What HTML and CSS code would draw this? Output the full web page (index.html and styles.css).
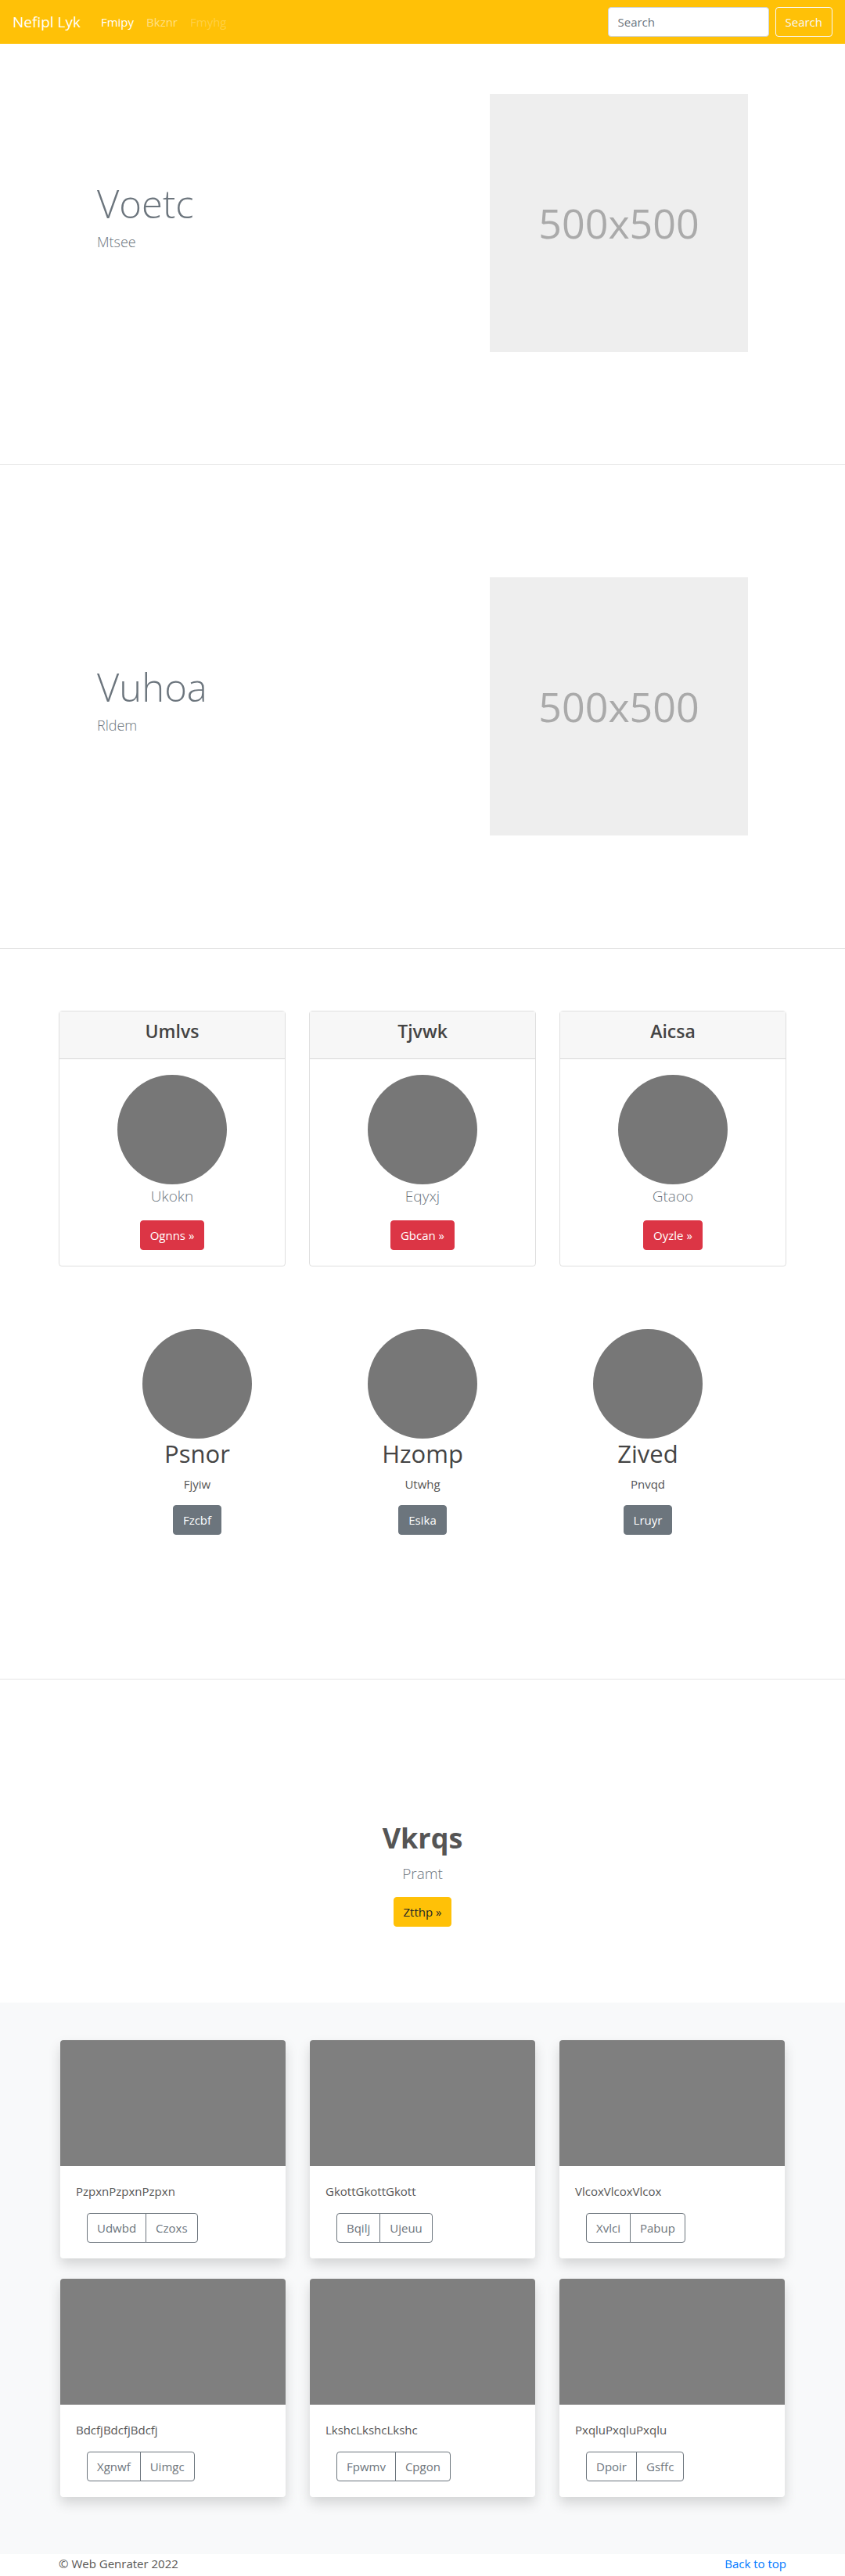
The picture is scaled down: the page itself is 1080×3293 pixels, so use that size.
FILE: index.html
```html
<!DOCTYPE html>
<html lang="en">
<head>
<meta charset="utf-8">
<title>Nefipl Lyk</title>
<link rel="stylesheet" href="styles.css">
</head>
<body>
<nav class="navbar">
  <a class="brand" href="#">Nefipl Lyk</a>
  <ul class="nav">
    <li><a class="nav-link active" href="#">Fmipy</a></li>
    <li><a class="nav-link" href="#">Bkznr</a></li>
    <li><a class="nav-link disabled" href="#">Fmyhg</a></li>
  </ul>
  <form class="search">
    <input class="search-input" type="text" placeholder="Search">
    <button class="search-btn" type="button">Search</button>
  </form>
</nav>

<section class="feature feature-first">
  <div class="feature-row">
    <div class="feature-text">
      <h1 class="feature-title">Voetc</h1>
      <p class="feature-lead">Mtsee</p>
    </div>
    <div class="placeholder">500x500</div>
  </div>
</section>
<hr class="divider">

<section class="feature feature-second">
  <div class="feature-row">
    <div class="feature-text">
      <h1 class="feature-title">Vuhoa</h1>
      <p class="feature-lead">Rldem</p>
    </div>
    <div class="placeholder">500x500</div>
  </div>
</section>
<hr class="divider">

<section class="team">
  <div class="card-row">
    <div class="p-card">
      <div class="p-card-header"><h4 class="p-card-title">Umlvs</h4></div>
      <div class="p-card-body">
        <div class="circle"></div>
        <p class="p-card-text">Ukokn</p>
        <a class="btn btn-danger" href="#">Ognns &raquo;</a>
      </div>
    </div>
    <div class="p-card">
      <div class="p-card-header"><h4 class="p-card-title">Tjvwk</h4></div>
      <div class="p-card-body">
        <div class="circle"></div>
        <p class="p-card-text">Eqyxj</p>
        <a class="btn btn-danger" href="#">Gbcan &raquo;</a>
      </div>
    </div>
    <div class="p-card">
      <div class="p-card-header"><h4 class="p-card-title">Aicsa</h4></div>
      <div class="p-card-body">
        <div class="circle"></div>
        <p class="p-card-text">Gtaoo</p>
        <a class="btn btn-danger" href="#">Oyzle &raquo;</a>
      </div>
    </div>
  </div>

  <div class="marketing">
    <div class="m-item">
      <div class="circle"></div>
      <h2 class="m-title">Psnor</h2>
      <p class="m-text">Fjyiw</p>
      <a class="btn btn-secondary" href="#">Fzcbf</a>
    </div>
    <div class="m-item">
      <div class="circle"></div>
      <h2 class="m-title">Hzomp</h2>
      <p class="m-text">Utwhg</p>
      <a class="btn btn-secondary" href="#">Esika</a>
    </div>
    <div class="m-item">
      <div class="circle"></div>
      <h2 class="m-title">Zived</h2>
      <p class="m-text">Pnvqd</p>
      <a class="btn btn-secondary" href="#">Lruyr</a>
    </div>
  </div>
</section>
<hr class="divider">

<section class="cta">
  <h1 class="cta-title">Vkrqs</h1>
  <p class="cta-lead">Pramt</p>
  <a class="btn btn-warning" href="#">Ztthp &raquo;</a>
</section>

<section class="album">
  <div class="album-grid">
    <div class="a-card">
      <div class="a-thumb"></div>
      <div class="a-body">
        <p class="a-text">PzpxnPzpxnPzpxn</p>
        <div class="btn-group"><a class="btn-o" href="#">Udwbd</a><a class="btn-o" href="#">Czoxs</a></div>
      </div>
    </div>
    <div class="a-card">
      <div class="a-thumb"></div>
      <div class="a-body">
        <p class="a-text">GkottGkottGkott</p>
        <div class="btn-group"><a class="btn-o" href="#">Bqilj</a><a class="btn-o" href="#">Ujeuu</a></div>
      </div>
    </div>
    <div class="a-card">
      <div class="a-thumb"></div>
      <div class="a-body">
        <p class="a-text">VlcoxVlcoxVlcox</p>
        <div class="btn-group"><a class="btn-o" href="#">Xvlci</a><a class="btn-o" href="#">Pabup</a></div>
      </div>
    </div>
    <div class="a-card">
      <div class="a-thumb"></div>
      <div class="a-body">
        <p class="a-text">BdcfjBdcfjBdcfj</p>
        <div class="btn-group"><a class="btn-o" href="#">Xgnwf</a><a class="btn-o" href="#">Uimgc</a></div>
      </div>
    </div>
    <div class="a-card">
      <div class="a-thumb"></div>
      <div class="a-body">
        <p class="a-text">LkshcLkshcLkshc</p>
        <div class="btn-group"><a class="btn-o" href="#">Fpwmv</a><a class="btn-o" href="#">Cpgon</a></div>
      </div>
    </div>
    <div class="a-card">
      <div class="a-thumb"></div>
      <div class="a-body">
        <p class="a-text">PxqluPxqluPxqlu</p>
        <div class="btn-group"><a class="btn-o" href="#">Dpoir</a><a class="btn-o" href="#">Gsffc</a></div>
      </div>
    </div>
  </div>
</section>

<footer class="footer">
  <p class="footer-copy">&copy; Web Genrater 2022</p>
  <a class="footer-top" href="#">Back to top</a>
</footer>
</body>
</html>
```
FILE: styles.css
```css
* { box-sizing: border-box; }
html, body { margin: 0; padding: 0; }
body {
  font-family: "Open Sans", "Noto Sans", sans-serif;
  font-size: 16px;
  line-height: 1.5;
  color: #212529;
  background: #fff;
}
a { text-decoration: none; }

/* navbar */
.navbar {
  display: flex;
  align-items: center;
  height: 56px;
  padding: 0 16px;
  background: #ffc107;
}
.brand {
  font-size: 19px;
  line-height: 30px;
  color: #fff;
  margin-right: 18px;
}
.nav {
  display: flex;
  flex: 1;
  list-style: none;
  margin: 0;
  padding: 0;
}
.nav-link {
  display: block;
  padding: 8px;
  font-size: 15px;
  color: rgba(255,255,255,.5);
}
.nav-link.active { color: #fff; }
.nav-link.disabled { color: rgba(255,255,255,.25); }
.search { display: flex; margin: 0; }
.search-input {
  width: 206px;
  height: 38px;
  padding: 6px 12px;
  margin-right: 8px;
  border: 1px solid #ced4da;
  border-radius: 4px;
  font: inherit;
  font-size: 15px;
  color: #495057;
  background: #fff;
}
.search-input::placeholder { color: #6c757d; }
.search-btn {
  height: 38px;
  padding: 6px 12px;
  border: 1px solid #f8f9fa;
  border-radius: 4px;
  background: transparent;
  color: #f8f9fa;
  font: inherit;
  font-size: 15px;
}

/* features */
.feature-first { padding: 64px 0 143px; }
.feature-second { padding: 144px 0 144px; }
.feature-row {
  display: flex;
  align-items: center;
  width: 960px;
  margin: 0 auto;
}
.feature-text { flex: 1; padding-left: 64px; }
.feature-title {
  margin: 0 0 6px;
  font-size: 49px;
  font-weight: 300;
  line-height: 1.2;
  color: #6c757d;
}
.feature-lead {
  margin: 0 0 16px;
  font-size: 18px;
  font-weight: 300;
  line-height: 1.5;
  color: #6c757d;
}
.placeholder {
  width: 330px;
  height: 330px;
  margin-right: 64px;
  background: #eee;
  color: #aaa;
  display: flex;
  align-items: center;
  justify-content: center;
  font-size: 52px;
}
.divider {
  margin: 0;
  border: 0;
  border-top: 1px solid #e5e5e5;
}

/* team */
.team { padding: 79px 0 184px; }
.card-row {
  display: grid;
  grid-template-columns: repeat(3, 290px);
  column-gap: 30px;
  justify-content: center;
}
.p-card {
  border: 1px solid rgba(0,0,0,.125);
  border-radius: 4px;
  text-align: center;
}
.p-card-header {
  background: #f7f7f7;
  border-bottom: 1px solid rgba(0,0,0,.125);
  padding: 12px 20px;
}
.p-card-title {
  margin: 0 0 8px;
  font-size: 23px;
  font-weight: 600;
  line-height: 1.2;
  color: #444;
}
.p-card-body { padding: 20px; }
.circle {
  width: 140px;
  height: 140px;
  border-radius: 50%;
  background: #777;
  margin: 0 auto;
}
.p-card-text {
  margin: 0 0 16px;
  font-size: 19px;
  font-weight: 300;
  line-height: 30px;
  color: #6c757d;
}
.btn {
  display: inline-block;
  padding: 6px 12px;
  border: 1px solid transparent;
  border-radius: 4px;
  font-size: 15px;
  line-height: 24px;
}
.btn-danger { background: #dc3545; border-color: #dc3545; color: #fff; }
.btn-secondary { background: #6c757d; border-color: #6c757d; color: #fff; }
.btn-warning { background: #ffc107; border-color: #ffc107; color: #212529; }

.marketing {
  display: grid;
  grid-template-columns: repeat(3, 288px);
  justify-content: center;
  margin-top: 80px;
}
.m-item { text-align: center; }
.m-title {
  margin: 1px 0 9px;
  font-size: 31px;
  font-weight: 400;
  line-height: 1.2;
  color: #444;
}
.m-text {
  margin: 0 0 16px;
  font-size: 15px;
  color: #555;
}

/* cta */
.cta {
  padding: 181px 0 97px;
  text-align: center;
}
.cta-title {
  margin: 0 0 9px;
  font-size: 36px;
  font-weight: 700;
  line-height: 1.2;
  color: #555;
}
.cta-lead {
  margin: 0 0 15px;
  font-size: 19px;
  font-weight: 300;
  line-height: 30px;
  color: #6c757d;
}

/* album */
.album {
  background: #f8f9fa;
  padding: 48px 0 73px;
}
.album-grid {
  display: grid;
  grid-template-columns: repeat(3, 288px);
  column-gap: 31px;
  row-gap: 26px;
  justify-content: center;
}
.a-card {
  background: #fff;
  border-radius: 4px;
  overflow: hidden;
  box-shadow: 0 8px 16px rgba(0,0,0,.15);
}
.a-thumb { height: 161px; background: #7f7f7f; }
.a-body { padding: 20px; }
.a-text {
  margin: 0 0 16px;
  font-size: 15px;
  line-height: 24px;
  color: #555;
}
.btn-group { display: inline-flex; margin-left: 14px; }
.btn-o {
  display: inline-block;
  padding: 6px 12px;
  border: 1px solid #6c757d;
  font-size: 15px;
  line-height: 24px;
  color: #6c757d;
}
.btn-o:first-child { border-radius: 4px 0 0 4px; }
.btn-o:last-child { border-radius: 0 4px 4px 0; margin-left: -1px; }

/* footer */
.footer {
  display: flex;
  justify-content: space-between;
  width: 930px;
  margin: 0 auto;
  padding-bottom: 24px;
}
.footer-copy { margin: 0; line-height: 24px; color: #555; font-size: 15px; }
.footer-top { line-height: 24px; color: #007bff; font-size: 15px; }
```
